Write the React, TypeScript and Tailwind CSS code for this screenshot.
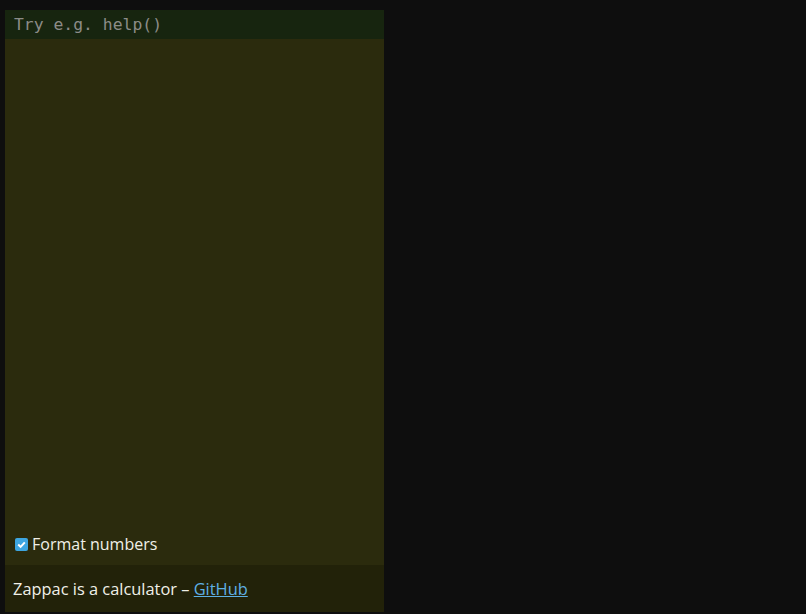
import React from "react";

export default function App() {
  return (
    <div className="w-[806px] h-[614px] bg-[#0e0e0e] pt-[10px] pl-[5px] overflow-hidden">
      <div className="w-[379px] h-[602px] bg-[#2b2b0d] flex flex-col">
        <div className="h-[29px] bg-[#17250f] flex items-center pl-[9px] pt-[1px]">
          <span className="text-[16.4px] text-[#8c8c88] leading-none" style={{ fontFamily: '"DejaVu Sans Mono", monospace' }}>
            Try e.g. help()
          </span>
        </div>
        <div className="flex-1" />
        <div className="h-[36px] pb-[6px] flex items-center pl-[10px] gap-[4px] text-[16px] text-[#f0f0e8]" style={{ fontFamily: '"Open Sans", sans-serif' }}>
          <span className="w-[13px] h-[13px] bg-[#3ea6e0] rounded-[2px] flex items-center justify-center">
            <svg width="11" height="11" viewBox="0 0 10 10"><path d="M2 5 L4.2 7.2 L8 3" stroke="white" strokeWidth="1.8" fill="none" /></svg>
          </span>
          <span>Format numbers</span>
        </div>
        <div className="h-[47px] bg-[#222209] flex items-center pl-[8px] pt-[2px] text-[16.4px] text-[#f0f0e8]" style={{ fontFamily: '"Open Sans", sans-serif' }}>
          <span>
            Zappac is a calculator – <a className="text-[#5eb0e4] underline">GitHub</a>
          </span>
        </div>
      </div>
    </div>
  );
}
